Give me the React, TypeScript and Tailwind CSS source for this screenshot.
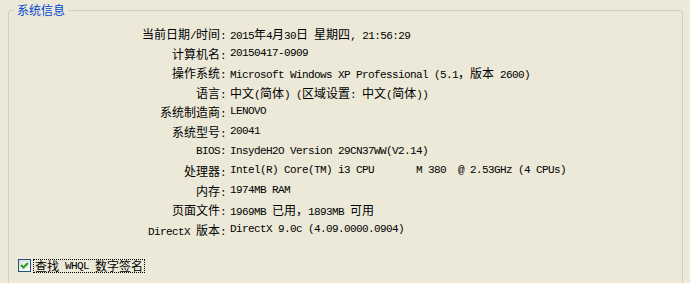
import React from "react";

const CJK = /([\u3000-\u303f\u4e00-\u9fff\uff00-\uffef]+)/;

// SimSun-style mix: half-width Latin at 6px, full-width CJK at 12px
function Mixed({ text }: { text: string }) {
  return (
    <>
      {text.split(CJK).map((part, i) =>
        CJK.test(part) ? (
          <span key={i} className="text-[12px] tracking-normal font-['Noto_Sans_CJK_SC',sans-serif]">
            {part}
          </span>
        ) : (
          <span key={i}>{part}</span>
        )
      )}
    </>
  );
}

const rows: [string, string][] = [
  ["当前日期/时间:", "2015年4月30日 星期四, 21:56:29"],
  ["计算机名:", "20150417-0909"],
  ["操作系统:", "Microsoft Windows XP Professional (5.1，版本 2600)"],
  ["语言:", "中文(简体) (区域设置: 中文(简体))"],
  ["系统制造商:", "LENOVO"],
  ["系统型号:", "20041"],
  ["BIOS:", "InsydeH2O Version 29CN37WW(V2.14)"],
  ["处理器:", "Intel(R) Core(TM) i3 CPU       M 380  @ 2.53GHz (4 CPUs)"],
  ["内存:", "1974MB RAM"],
  ["页面文件:", "1969MB 已用，1893MB 可用"],
  ["DirectX 版本:", "DirectX 9.0c (4.09.0000.0904)"],
];

function CheckBox() {
  return (
    <div className="w-[13px] h-[13px] border border-[#1c5180] bg-gradient-to-br from-[#dcdcd7] to-white flex items-center justify-center">
      <svg width="11" height="11" viewBox="0 0 11 11">
        <path d="M2 5 L4.5 7.5 L9 3" fill="none" stroke="#21a121" strokeWidth="2" />
      </svg>
    </div>
  );
}

export default function App() {
  return (
    <div className="w-[690px] h-[283px] overflow-hidden bg-[#ece9d8] pl-2 pr-[7px] pt-[2px] text-black font-['Liberation_Mono','Noto_Sans_CJK_SC',monospace] text-[11px] tracking-[-0.6px]">
      <fieldset className="h-[320px] border border-[#d0d0bf] rounded-[3px]">
        <legend className="ml-[5px] px-[3px] text-[12px] leading-[16px] tracking-normal text-[#0046d5] font-['Noto_Sans_CJK_SC',sans-serif]">
          系统信息
        </legend>
        <div className="pt-[6px] grid grid-cols-[217px_1fr] gap-x-[4px]">
          {rows.map(([label, value]) => (
            <React.Fragment key={label}>
              <div className="h-[19.6px] leading-[19.6px] text-right whitespace-pre">
                <Mixed text={label} />
              </div>
              <div className="h-[19.6px] leading-[19.6px] whitespace-pre">
                <Mixed text={value} />
              </div>
            </React.Fragment>
          ))}
        </div>
        <div className="mt-[19px] ml-[9px] flex items-center gap-[2px]">
          <CheckBox />
          <div className="h-[14px] px-[1px] border border-dotted border-black flex items-center leading-[12px] whitespace-pre">
            <Mixed text="查找 WHQL 数字签名" />
          </div>
        </div>
      </fieldset>
    </div>
  );
}
